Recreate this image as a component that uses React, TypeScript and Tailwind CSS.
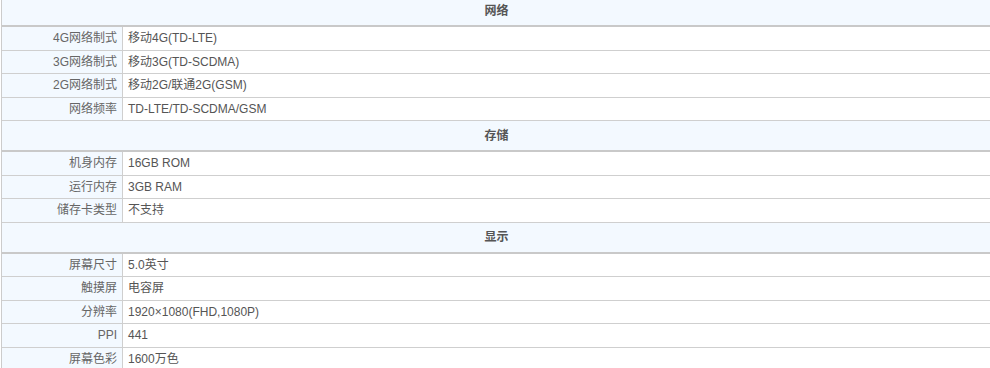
type SpecRow = { label: string; value: string };
type SpecSection = { title: string; rows: SpecRow[] };

const sections: SpecSection[] = [
  {
    title: "网络",
    rows: [
      { label: "4G网络制式", value: "移动4G(TD-LTE)" },
      { label: "3G网络制式", value: "移动3G(TD-SCDMA)" },
      { label: "2G网络制式", value: "移动2G/联通2G(GSM)" },
      { label: "网络频率", value: "TD-LTE/TD-SCDMA/GSM" },
    ],
  },
  {
    title: "存储",
    rows: [
      { label: "机身内存", value: "16GB ROM" },
      { label: "运行内存", value: "3GB RAM" },
      { label: "储存卡类型", value: "不支持" },
    ],
  },
  {
    title: "显示",
    rows: [
      { label: "屏幕尺寸", value: "5.0英寸" },
      { label: "触摸屏", value: "电容屏" },
      { label: "分辨率", value: "1920×1080(FHD,1080P)" },
      { label: "PPI", value: "441" },
      { label: "屏幕色彩", value: "1600万色" },
    ],
  },
];

export default function App() {
  return (
    <main className="h-[368px] w-full overflow-hidden bg-white pl-px font-['Liberation_Sans','Noto_Sans_CJK_SC',sans-serif] text-[12px]">
      <div className="-mt-[4px] border-l border-[#cccccc]">
        {sections.map((section) => (
          <section key={section.title}>
            <div className="flex h-[31px] items-center justify-center border-b-2 border-[#c9c9c9] bg-[#f3f9ff] pl-px font-bold text-[#555555]">
              {section.title}
            </div>
            {section.rows.map((row) => (
              <div key={row.label} className="flex h-[23.5px] border-b border-[#cfcfcf]">
                <div className="flex w-[121px] shrink-0 items-center justify-end border-r border-[#cfcfcf] bg-[#f3f9ff] pr-[5px] text-[#666666]">
                  {row.label}
                </div>
                <div className="flex items-center pl-[5px] text-[#555555]">{row.value}</div>
              </div>
            ))}
          </section>
        ))}
      </div>
    </main>
  );
}
